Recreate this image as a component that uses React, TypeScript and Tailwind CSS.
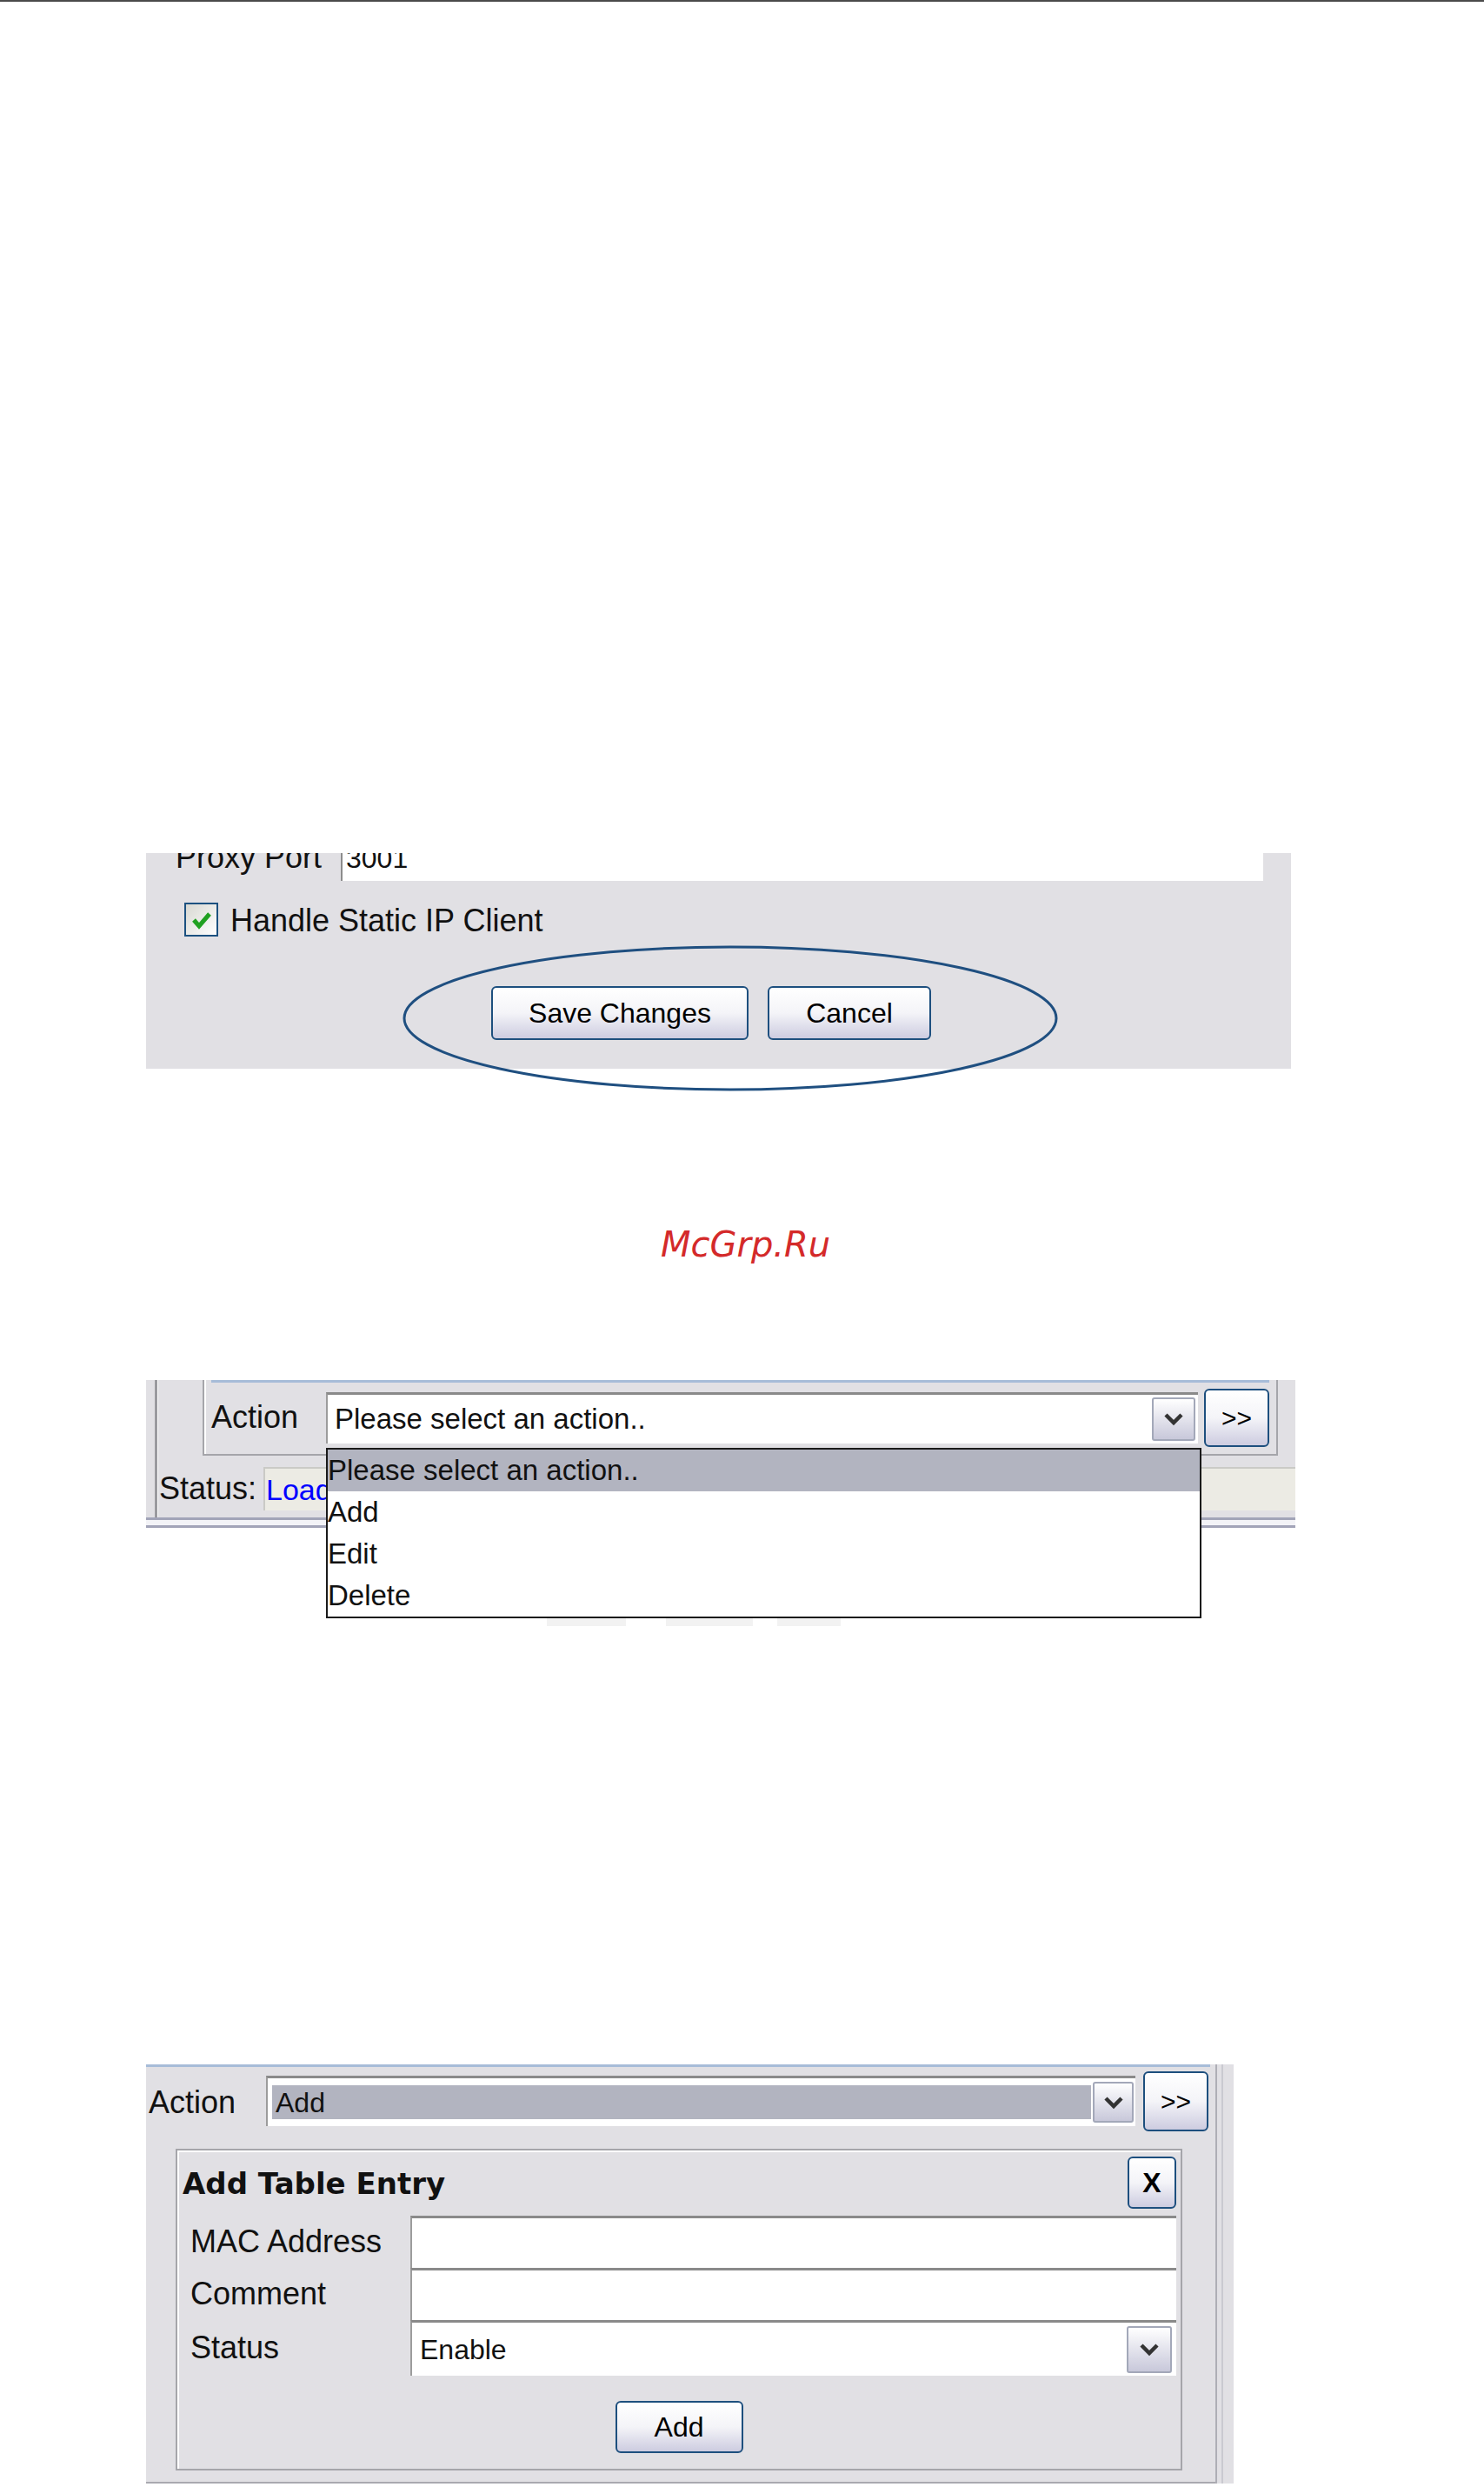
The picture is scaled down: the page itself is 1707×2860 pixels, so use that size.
import React from "react";
import clsx from "clsx";

const FONT = "font-['Liberation_Sans',Arial,sans-serif]";

function XpButton({
  label,
  className,
  textClass = "text-[32px]",
}: {
  label: string;
  className?: string;
  textClass?: string;
}) {
  return (
    <div
      className={clsx(
        "flex items-center justify-center rounded-[6px] border-2 border-[#1d4f7e] bg-linear-to-b from-white via-[#f4f4f8] to-[#cdcce0] text-black",
        textClass,
        className
      )}
    >
      {label}
    </div>
  );
}

function ComboArrow({ className }: { className?: string }) {
  return (
    <div
      className={clsx(
        "flex shrink-0 items-center justify-center rounded-[3px] border-2 border-[#a3a8b9] bg-linear-to-b from-white to-[#c8c8da]",
        className
      )}
    >
      <svg width="26" height="16" viewBox="0 0 26 16">
        <polyline
          points="4,3 13,12 22,3"
          fill="none"
          stroke="#333"
          strokeWidth="4.5"
        />
      </svg>
    </div>
  );
}

function Sunken({
  className,
  children,
}: {
  className?: string;
  children?: React.ReactNode;
}) {
  return (
    <div
      className={clsx(
        "relative flex items-center border-t-[3px] border-l-2 border-t-[#8a8a8a] border-l-[#9c9c9c] bg-white",
        className
      )}
    >
      {children}
    </div>
  );
}

function ProxyPanel() {
  return (
    <div className="relative ml-[168px] mt-[979px] h-[248px] w-[1317px] bg-[#e1e0e4]">
      {/* row cut off at the top of the capture */}
      <div className="flex h-[32px] overflow-hidden">
        <div className="mt-[-13px] w-[224px] pl-[34px] text-[36px] leading-[36px] text-[#111]">
          Proxy Port
        </div>
        <div className="h-[32px] w-[1061px] border-l-2 border-[#8c8c8c] bg-white pl-[4px]">
          <div className="mt-[-10px] text-[32px] leading-[32px] text-[#111]">3001</div>
        </div>
      </div>

      <div className="ml-[44px] mt-[25px] flex items-center gap-[14px]">
        <div className="flex h-[39px] w-[39px] items-center justify-center border-2 border-[#1c5180] bg-linear-to-br from-[#d8d8d2] to-white">
          <svg width="26" height="24" viewBox="0 0 26 24">
            <polyline
              points="4,12 10,19 22,5"
              fill="none"
              stroke="#21a121"
              strokeWidth="5"
            />
          </svg>
        </div>
        <span className="pt-[3px] text-[36px] leading-[36px] text-[#111]">
          Handle Static IP Client
        </span>
      </div>

      <div className="ml-[397px] mt-[57px] flex gap-[22px]">
        <XpButton label="Save Changes" className="h-[62px] w-[296px]" />
        <XpButton label="Cancel" className="h-[62px] w-[188px]" />
      </div>

      {/* hand-drawn highlight ellipse over the buttons */}
      <svg
        className="pointer-events-none absolute left-[295px] top-[106px] overflow-visible"
        width="754"
        height="168"
        viewBox="0 0 754 168"
      >
        <ellipse
          cx="377"
          cy="84"
          rx="375"
          ry="82"
          fill="none"
          stroke="#1f4f80"
          strokeWidth="3"
        />
      </svg>
    </div>
  );
}

const ACTIONS = ["Please select an action..", "Add", "Edit", "Delete"];

function ActionListPanel() {
  return (
    <div className="relative ml-[168px] mt-[136px] h-[170px] w-[1322px] bg-[#e1e0e4]">
      <div className="ml-[10px] h-[158px] border-l-[3px] border-[#9a9a9e] shadow-[inset_1px_0_0_#ffffff]">
        <div className="ml-[52px] mt-[3px] flex h-[87px] w-[1237px] flex-col border-x-2 border-b-2 border-[#a5a5aa] shadow-[inset_2px_0_0_#ffffff]">
          <div className="mx-[8px] h-[3px] bg-[#a7bcd8]" />
          <div className="flex h-[82px] items-center pb-[2px] pl-[8px]">
            <div className="w-[132px] text-[36px] leading-[36px] text-[#111]">Action</div>
            <Sunken className="h-[59px] w-[1003px] pr-[3px]">
              <span className="flex-1 pl-[8px] text-[33px] text-[#111]">
                Please select an action..
              </span>
              <ComboArrow className="h-[50px] w-[50px]" />
            </Sunken>
            <XpButton
              label=">>"
              className="ml-[7px] h-[67px] w-[75px]"
              textClass="text-[30px]"
            />
          </div>
        </div>

        <div className="mt-[13px] flex h-[50px] items-center">
          <div className="w-[122px] pl-[2px] text-[36px] leading-[36px] text-[#111]">
            Status:
          </div>
          <div className="flex h-[50px] flex-1 items-center border-l-2 border-t-2 border-[#cacac6] bg-[#ecebe4] pl-[1px] text-[34px] text-[#0000ff]">
            Loading...
          </div>
        </div>
      </div>
      <div className="h-[12px] border-y-[3px] border-[#a2a4b8] bg-[#f3f3f7]" />

      {/* open dropdown list lying over the panel */}
      <div className="absolute left-[207px] top-[78px] w-[1007px]">
        <div className="border-2 border-[#1a1a1a] bg-white">
          {ACTIONS.map((a, i) => (
            <div
              key={a}
              className={clsx(
                "h-[48px] text-[33px] leading-[48px] text-[#111]",
                i === 0 && "bg-[#b2b4c0]"
              )}
            >
              {a}
            </div>
          ))}
        </div>
        <div className="flex h-[9px]">
          <div className="ml-[254px] w-[91px] bg-[#f2f2f2]" />
          <div className="ml-[46px] w-[100px] bg-[#f2f2f2]" />
          <div className="ml-[28px] w-[73px] bg-[#f2f2f2]" />
        </div>
      </div>
    </div>
  );
}

function FormRow({
  label,
  children,
  h,
}: {
  label: string;
  children: React.ReactNode;
  h: string;
}) {
  return (
    <div className={clsx("flex items-center", h)}>
      <div className="w-[268px] pl-[15px] text-[36px] leading-[36px] text-[#111]">
        {label}
      </div>
      {children}
    </div>
  );
}

function AddEntryPanel() {
  return (
    <div className="ml-[168px] mt-[617px] flex h-[482px] w-[1251px] bg-[#e1e0e4]">
      <div className="flex w-[1230px] flex-col border-b-2 border-[#a9a9b0]">
        <div className="h-[3px] w-[1224px] bg-[#a7bcd8]" />
        <div className="flex h-[78px] items-center pl-[3px]">
          <div className="w-[135px] pt-[4px] text-[36px] leading-[36px] text-[#111]">
            Action
          </div>
          <Sunken className="h-[58px] w-[1000px] pr-[2px]">
            <div className="ml-[5px] mr-[2px] flex h-[39px] flex-1 items-center bg-[#b2b4c0] pl-[4px] text-[32px] text-[#111]">
              Add
            </div>
            <ComboArrow className="h-[47px] w-[47px]" />
          </Sunken>
          <XpButton
            label=">>"
            className="ml-[9px] h-[69px] w-[75px]"
            textClass="text-[30px]"
          />
        </div>

        <div className="ml-[34px] mt-[16px] flex h-[370px] w-[1158px] flex-col border-2 border-[#a5a5aa] shadow-[inset_2px_2px_0_#ffffff]">
          <div className="flex h-[75px] items-start justify-between pl-[6px] pr-[5px]">
            <div className="mt-[18px] font-['DejaVu_Sans',sans-serif] text-[34px] font-bold leading-[40px] text-[#111]">
              Add Table Entry
            </div>
            <XpButton
              label="X"
              className="mt-[7px] h-[60px] w-[56px] font-bold"
              textClass="text-[32px]"
            />
          </div>
          <FormRow label="MAC Address" h="h-[60px]">
            <Sunken className="h-[60px] w-[881px]" />
          </FormRow>
          <FormRow label="Comment" h="h-[60px]">
            <Sunken className="h-[60px] w-[881px]" />
          </FormRow>
          <FormRow label="Status" h="h-[64px]">
            <Sunken className="h-[64px] w-[881px] pr-[5px]">
              <span className="flex-1 pl-[9px] text-[32px] text-[#111]">Enable</span>
              <ComboArrow className="h-[54px] w-[52px]" />
            </Sunken>
          </FormRow>
          <div className="mt-[29px] flex justify-center">
            <XpButton label="Add" className="h-[60px] w-[147px]" />
          </div>
        </div>
      </div>
      <div className="w-[2px] bg-[#aeaeb6]" />
      <div className="w-[5px]" />
      <div className="w-[2px] bg-[#c9c9d0]" />
    </div>
  );
}

export default function App() {
  return (
    <div className={clsx("relative h-[2860px] w-[1707px] overflow-hidden bg-white", FONT)}>
      <div className="h-[2px] bg-[#4a4a4a]" />
      <ProxyPanel />
      <div className="ml-[760px] mt-[182px] font-['DejaVu_Sans',sans-serif] text-[40px] italic leading-[40px] text-[#d42a2a]">
        McGrp.Ru
      </div>
      <ActionListPanel />
      <AddEntryPanel />
    </div>
  );
}
